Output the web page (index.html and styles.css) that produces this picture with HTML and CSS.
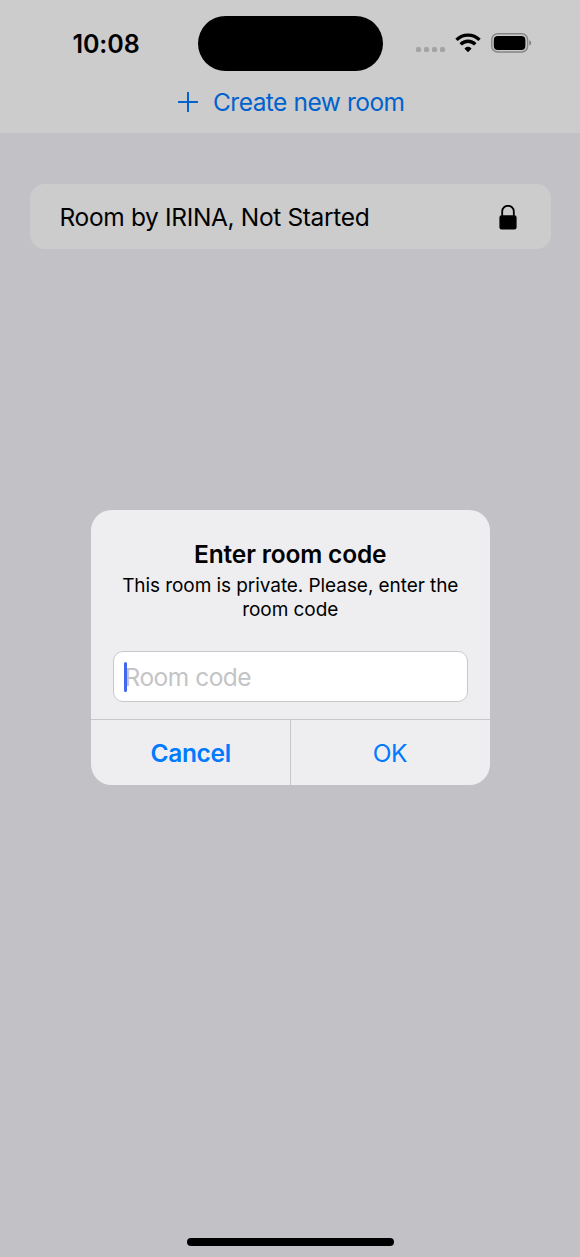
FILE: index.html
```html
<!DOCTYPE html>
<html lang="en">
<head>
<meta charset="utf-8">
<meta name="viewport" content="width=device-width, initial-scale=1">
<title>Rooms</title>
<link rel="stylesheet" href="styles.css">
</head>
<body>
<div class="screen">
  <header class="header">
    <div class="status">
      <div class="status-left"><span class="time">10:08</span></div>
      <div class="island"></div>
      <div class="status-right">
        <div class="dots"><i></i><i></i><i></i><i></i></div>
        <svg class="wifi" viewBox="0 0 26 20" width="26" height="20">
          <g fill="none" stroke="#000" stroke-width="3.4">
            <path d="M1.5 6.9A16.2 16.2 0 0 1 24.5 6.9"/>
            <path d="M5.7 11.4A10.2 10.2 0 0 1 20.3 11.4"/>
          </g>
          <path d="M9.7 15.2Q13 12.5 16.3 15.2Q16.6 15.6 16.2 16L13.5 18.7Q13 19.1 12.5 18.7L9.8 16Q9.4 15.6 9.7 15.2Z"/>
        </svg>
        <svg class="battery" viewBox="0 0 41 20" width="41" height="20">
          <rect x=".8" y=".8" width="35.8" height="18.2" rx="5.8" fill="none" stroke="#848484" stroke-width="1.4"/>
          <rect x="2.8" y="2.9" width="31.6" height="14" rx="4"/>
          <path d="M38.3 7.2Q40.2 8 40.2 9.9T38.3 12.6Z" fill="#7c7c7c"/>
        </svg>
      </div>
    </div>
    <div class="create">
      <svg viewBox="0 0 20 20" width="20" height="20"><path d="M10 .8V19.2M.8 10H19.2" fill="none" stroke="#0062cc" stroke-width="2" stroke-linecap="round"/></svg>
      <span class="create-label">Create new room</span>
    </div>
  </header>
  <main class="list">
    <div class="room">
      <span class="room-name">Room by IRINA, Not Started</span>
      <svg class="lock" viewBox="0 0 18 25" width="18" height="25"><path d="M3.2 12V6.5C3.2 -1.1 14.8 -1.1 14.8 6.5V12" fill="none" stroke="#000" stroke-width="1.8"/><rect x=".4" y="10.2" width="17.2" height="14.2" rx="2.2"/></svg>
    </div>
  </main>
  <div class="home"></div>
</div>
<div class="overlay">
  <div class="alert">
    <div class="alert-body">
      <div class="title">Enter room code</div>
      <div class="message">This room is private. Please, enter the<br>room code</div>
      <div class="field"><span class="caret"></span><span class="placeholder">Room code</span></div>
    </div>
    <div class="actions">
      <div class="action"><span class="cancel">Cancel</span></div>
      <div class="action"><span class="ok">OK</span></div>
    </div>
  </div>
</div>
</body>
</html>
```
FILE: styles.css
```css
* { box-sizing: border-box; }
body {
  margin: 0;
  font-family: Inter, sans-serif;
  font-size: 24.5px;
  color: #000;
  background: #c2c1c6;
}
span { white-space: nowrap; }
svg { display: block; flex: none; }
.screen { height: 1257px; display: flex; flex-direction: column; }
.header { height: 133px; background: #ccc; }
.status {
  height: 87px;
  display: grid;
  grid-template-columns: 197.5px 185px 197.5px;
  align-items: center;
}
.status-left { padding-left: 72.5px; }
.time { font-weight: 600; font-size: 25px; letter-spacing: -0.1px; }
.island { height: 55px; border-radius: 28px; background: #000; }
.status-right { display: flex; align-items: center; padding: 0 0 2px 33.5px; }
.dots { display: flex; gap: 3px; padding-top: 13px; }
.dots i { width: 5px; height: 5px; border-radius: 1.6px; background: #a3a3a3; }
.wifi { margin-left: 10px; }
.battery { margin-left: 10px; }
.create { display: flex; align-items: center; height: 30px; padding-left: 177.5px; gap: 15.5px; color: #0062cc; }
.create-label { letter-spacing: -0.53px; word-spacing: 0.3px; }
.list { flex: 1; padding: 51px 29.5px; }
.room {
  height: 65px;
  border-radius: 14.5px;
  background: #ccc;
  padding: 0 34px 0 30px;
  display: flex;
  align-items: center;
  justify-content: space-between;
}
.room-name { letter-spacing: -0.35px; padding-top: 1px; }
.lock { margin-top: 2px; }
.home { width: 207px; height: 8px; border-radius: 4px; background: #000; margin: 0 auto 11px; }
.overlay {
  position: absolute;
  top: 0;
  left: 0;
  width: 580px;
  height: 1257px;
  padding: 509.5px 90.5px 0 91px;
}
.alert {
  height: 275.5px;
  border-radius: 20.5px;
  background: #eeeef0;
  display: flex;
  flex-direction: column;
  overflow: hidden;
}
.alert-body { height: 209.5px; padding: 29.5px 22px 0; text-align: center; }
.title { font-weight: 600; line-height: 31px; letter-spacing: -0.17px; white-space: nowrap; }
.message { font-size: 19px; line-height: 23.5px; padding-top: 4px; white-space: nowrap; letter-spacing: -0.07px; }
.field {
  height: 51px;
  margin-top: 30px;
  border: 1px solid #c8c8ca;
  border-radius: 10px;
  background: #fff;
  display: flex;
  align-items: center;
  padding-left: 10px;
}
.caret { width: 3px; height: 30px; border-radius: 1.5px; background: #4169ef; z-index: 1; }
.placeholder { color: #c4c4c6; margin-left: -2.5px; letter-spacing: -0.5px; padding-top: 1px; }
.actions { flex: 1; border-top: 1px solid #c8c8ca; display: grid; grid-template-columns: 1fr 1fr; color: #007aff; }
.action { display: flex; align-items: center; justify-content: center; padding-top: 1px; }
.action + .action { border-left: 1px solid #c8c8ca; }
.cancel { font-weight: 600; letter-spacing: -0.35px; }
.ok { letter-spacing: -0.4px; padding-right: 1px; }
```
